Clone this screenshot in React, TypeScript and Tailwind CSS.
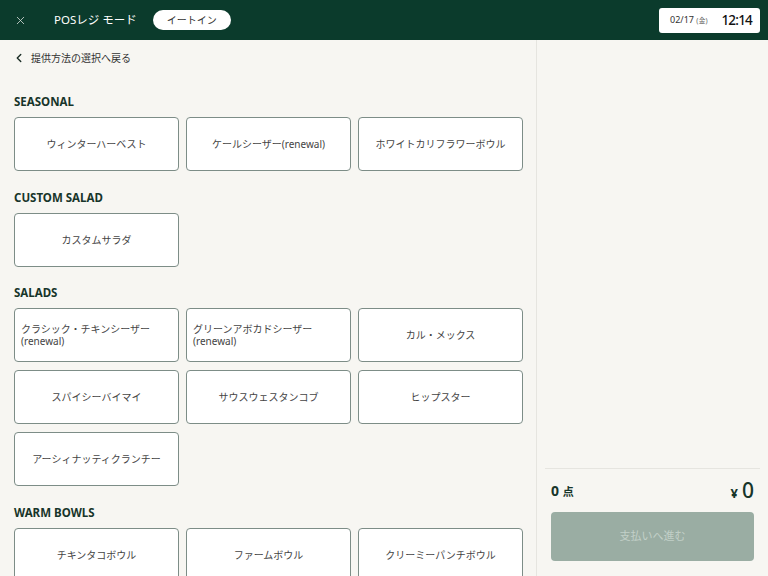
import { X, ChevronLeft } from 'lucide-react';

const sections: { title: string; items: string[] }[] = [
  { title: 'SEASONAL', items: ['ウィンターハーベスト', 'ケールシーザー(renewal)', 'ホワイトカリフラワーボウル'] },
  { title: 'CUSTOM SALAD', items: ['カスタムサラダ'] },
  {
    title: 'SALADS',
    items: [
      'クラシック・チキンシーザー\n(renewal)',
      'グリーンアボカドシーザー\n(renewal)',
      'カル・メックス',
      'スパイシーバイマイ',
      'サウスウェスタンコブ',
      'ヒップスター',
      'アーシィナッティクランチー',
    ],
  },
  { title: 'WARM BOWLS', items: ['チキンタコボウル', 'ファームボウル', 'クリーミーパンチボウル'] },
];

function MenuButton({ label }: { label: string }) {
  const multi = label.includes('\n');
  return (
    <button
      className={`h-[54px] bg-white border border-[#7d8d87] rounded-[4px] text-[10px] leading-[12px] text-[#444] flex items-center ${
        multi ? 'justify-start text-left px-[6px] whitespace-pre-line' : 'justify-center'
      }`}
    >
      {label}
    </button>
  );
}

export default function App() {
  return (
    <div
      className="w-[768px] h-[576px] overflow-hidden flex flex-col bg-[#f7f6f2]"
      style={{ fontFamily: '"Noto Sans", "Noto Sans CJK JP", sans-serif' }}
    >
      {/* ヘッダー */}
      <div className="h-[40px] shrink-0 bg-[#0b3b2c] flex items-center pl-[14px] pr-[8px]">
        <X className="w-[13px] h-[13px] text-[#d5dcd9]" strokeWidth={1.5} />
        <span className="ml-[27px] text-white text-[11.5px]">POSレジ モード</span>
        <span className="ml-[16px] h-[20px] px-[14px] bg-white rounded-full text-[10px] text-[#333] flex items-center">
          イートイン
        </span>
        <div className="ml-auto h-[25px] w-[101px] bg-white rounded-[3px] flex items-center pl-[11px] pr-[8px]">
          <span className="text-[9px] text-[#333]">
            02/17 <span className="text-[7px] text-[#666]">(金)</span>
          </span>
          <span className="ml-auto text-[13.5px] font-medium tracking-[-0.8px] text-[#111]">12:14</span>
        </div>
      </div>

      <div className="flex flex-1 min-h-0">
        {/* 左: メニュー */}
        <div className="w-[537px] border-r border-[#e6e5e0] overflow-hidden">
          <div className="h-[36px] flex items-center pl-[12px] gap-[5px] text-[10px] text-[#333]">
            <ChevronLeft className="w-[14px] h-[14px] text-[#1a2d25]" strokeWidth={2.4} />
            <span>提供方法の選択へ戻る</span>
          </div>
          <div className="px-[14px] pt-[18px]">
            {sections.map((s) => (
              <div key={s.title} className="mb-[18.5px]">
                <h2 className="h-[16px] leading-[16px] text-[11.5px] font-bold text-[#17352a] mb-[7px]">{s.title}</h2>
                <div className="grid grid-cols-3 gap-x-[7px] gap-y-[8px] w-[509px]">
                  {s.items.map((it) => (
                    <MenuButton key={it} label={it} />
                  ))}
                </div>
              </div>
            ))}
          </div>
        </div>

        {/* 右: 会計 */}
        <div className="flex-1 flex flex-col justify-end px-[14px] pb-[15px]">
          <div className="mx-[-6px] border-t border-[#e6e5e0]" />
          <div className="h-[43px] flex items-center justify-between">
            <span className="text-[#17352a] font-bold text-[14px]">
              0 <span className="text-[11px]">点</span>
            </span>
            <span className="text-[#17352a] font-bold">
              <span className="text-[13px]">¥</span> <span className="text-[21px] font-medium">0</span>
            </span>
          </div>
          <button className="h-[49px] w-full bg-[#9aada3] rounded-[4px] text-[11px] text-[#c2d0c8]">支払いへ進む</button>
        </div>
      </div>
    </div>
  );
}
